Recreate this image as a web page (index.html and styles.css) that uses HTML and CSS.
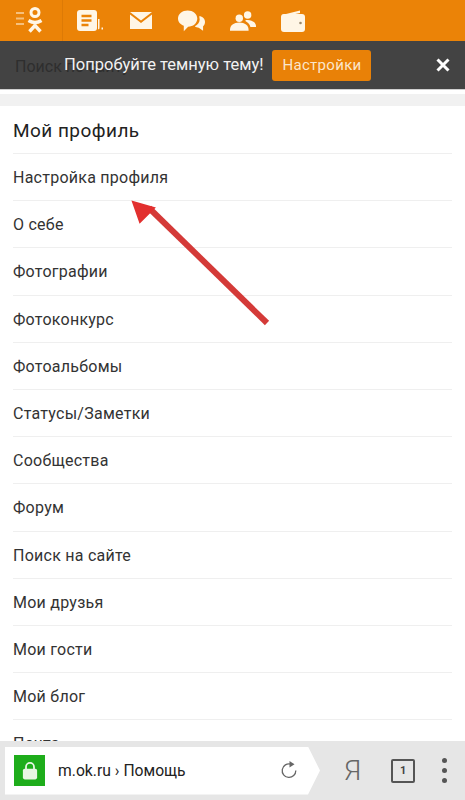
FILE: index.html
```html
<!DOCTYPE html>
<html lang="ru">
<head>
    <meta charset="UTF-8">
    <meta name="viewport" content="width=device-width, initial-scale=1.0">
    <title>Мой профиль</title>
    <link rel="stylesheet" href="styles.css">
</head>
<body>
    <div class="page">
        <header class="topbar">
            <div class="logo-cell">
                <svg class="logo" width="28" height="26" viewBox="0 0 28 26">
                    <path d="M1 6h8M1 11.500h8M1 17h8" class="logo-lines"/>
                    <circle cx="20" cy="5.500" r="4" class="logo-ring"/>
                    <path d="M13.500 13.500c4.500 2.800 8.500 2.800 13 0M20 16v2M14.500 24.500l5.500-6 5.500 6" class="logo-x"/>
                </svg>
            </div>
            <nav class="topnav">
                <svg class="nav-icon icon-feed" width="26" height="21" viewBox="0 0 26 21">
                    <path d="M3 0h14a3 3 0 0 1 3 3v15a3 3 0 0 1-3 3H3a3 3 0 0 1-3-3V3a3 3 0 0 1 3-3z" fill="#fff6e6"/>
                    <path d="M4.500 6h10M4.500 10.500h10M4.500 15h7" stroke="#eb8307" stroke-width="2.400"/>
                    <path d="M21 9h1.500v8a2 2 0 0 1-1.500 2.500zM24.500 17.500H26v2h-1.500z" fill="#fff6e6"/>
                </svg>
                <svg class="nav-icon icon-mail" width="22" height="17" viewBox="0 0 22 17">
                    <path d="M0 0h22L11 8.500z" fill="#fff6e6"/>
                    <path d="M0 2.500 11 11 22 2.500V17H0z" fill="#fff6e6"/>
                </svg>
                <svg class="nav-icon icon-chat" width="27" height="22" viewBox="0 0 28 22">
                    <path d="M22 6c3.500 0 6 2.500 6 6 0 2-.8 3.500-2 4.500V21l-4.500-3c-1.500 0-3-.5-4-1.500 2.800-1.500 5-4 5-7z" fill="#fff6e6"/>
                    <path d="M10 0c5.500 0 10 3.400 10 8.500S15.500 17 10.500 17L6 21.500V16C2.500 14.800 0 12 0 8.500 0 3.400 4.500 0 10 0z" fill="#fff6e6"/>
                </svg>
                <svg class="nav-icon icon-people" width="26" height="20" viewBox="0 0 28 21">
                    <circle cx="10" cy="7.500" r="4" fill="#fff6e6"/>
                    <circle cx="19" cy="4" r="4" fill="#fff6e6"/>
                    <path d="M0 20c0-5 4-8 10-8s10 3 10 8v1H0z" fill="#fff6e6"/>
                    <path d="M17 9.500c6 0 11 2 11 6.500v1h-6c-.8-3-2.500-5-5.500-6.500z" fill="#fff6e6"/>
                </svg>
                <svg class="nav-icon icon-wallet" width="24" height="22" viewBox="0 0 24 22">
                    <path d="M1 5 19 .5V3L5 6z" fill="#fff6e6"/>
                    <path d="M3 4h18a3 3 0 0 1 3 3v12a3 3 0 0 1-3 3H3a3 3 0 0 1-3-3V7a3 3 0 0 1 3-3z" fill="#fff6e6"/>
                    <circle cx="19.500" cy="13" r="1.300" fill="#9a8a70"/>
                </svg>
            </nav>
        </header>

        <div class="theme-bar">
            <span class="search-under">Поиск по сайту</span>
            <span class="theme-text">Попробуйте темную тему!</span>
            <button class="theme-btn">Настройки</button>
            <svg class="theme-close" width="14" height="14" viewBox="0 0 14 14">
                <path d="M1.500 1.500l11 11M12.500 1.500l-11 11" stroke="#fff" stroke-width="3"/>
            </svg>
        </div>

        <div class="gap-strip"></div>

        <main class="menu">
            <h2 class="menu-title">Мой профиль</h2>
            <a class="menu-item">Настройка профиля</a>
            <a class="menu-item">О себе</a>
            <a class="menu-item">Фотографии</a>
            <a class="menu-item">Фотоконкурс</a>
            <a class="menu-item">Фотоальбомы</a>
            <a class="menu-item">Статусы/Заметки</a>
            <a class="menu-item">Сообщества</a>
            <a class="menu-item">Форум</a>
            <a class="menu-item">Поиск на сайте</a>
            <a class="menu-item">Мои друзья</a>
            <a class="menu-item">Мои гости</a>
            <a class="menu-item">Мой блог</a>
            <a class="menu-item">Почта</a>
        </main>

        <svg class="arrow" width="160" height="140" viewBox="0 0 160 140">
            <path d="M147 133 29 18" stroke="#d43a38" stroke-width="6"/>
            <path d="M13 12 34 18 20 32z" fill="#e2302f" stroke="#e2302f" stroke-width="2"/>
        </svg>

        <footer class="browser-bar">
            <div class="address">
                <div class="lock-box">
                    <svg width="16" height="19" viewBox="0 0 18 20">
                        <path d="M4.500 9V6a4.500 4.500 0 0 1 9 0v3" fill="none" stroke="#e9f6e4" stroke-width="2"/>
                        <rect x="1" y="8" width="16" height="12" rx="2" fill="#e9f6e4"/>
                    </svg>
                </div>
                <span class="url">m.ok.ru › Помощь</span>
                <svg class="reload" width="17" height="19" viewBox="0 0 17 19">
                    <path d="M14.800 9.500a6.800 6.800 0 1 1-5-6.400" fill="none" stroke="#666" stroke-width="1.300"/>
                    <path d="M8.500 0l5 3.300-5 3.200z" fill="#666"/>
                </svg>
            </div>
            <div class="browser-tools">
                <span class="ya">Я</span>
                <span class="tabs">1</span>
                <span class="dots"><i></i><i></i><i></i></span>
            </div>
        </footer>
    </div>
</body>
</html>
```

FILE: styles.css
```css
* {
    box-sizing: border-box;
    margin: 0;
    padding: 0;
}

html, body {
    height: 100%;
}

body {
    background-color: white;
    font-family: Roboto, 'Liberation Sans', sans-serif;
    overflow: hidden;
}

.page {
    position: relative;
    width: 465px;
    height: 800px;
    overflow: hidden;
}

/* top orange bar */
.topbar {
    display: flex;
    height: 41px;
    background-color: #eb8307;
}

.logo-cell {
    width: 63px;
    padding: 7px 0 0 15px;
    border-right: 1px solid #dd7a06;
}

.logo-lines {
    fill: none;
    stroke: #f6c07c;
    stroke-width: 1.800;
}

.logo-ring {
    fill: none;
    stroke: #fff6e6;
    stroke-width: 3;
}

.logo-x {
    fill: none;
    stroke: #fff6e6;
    stroke-width: 3.400;
}

.topnav {
    display: flex;
    align-items: center;
    padding-left: 14px;
}

.icon-feed {
    margin-right: 27px;
}

.icon-mail {
    margin-right: 26px;
}

.icon-chat {
    margin-right: 25px;
}

.icon-people {
    margin-right: 25px;
}

/* dark theme hint */
.theme-bar {
    position: relative;
    display: flex;
    align-items: center;
    height: 49px;
    padding: 0 0 2px 64px;
    background-color: #434343;
    border-bottom: 1px solid #d0d0d0;
}

.search-under {
    position: absolute;
    left: 15px;
    top: 16px;
    color: #2e2e2e;
    font-size: 16px;
}

.theme-text {
    position: relative;
    color: #f2f2f2;
    font-size: 16.500px;
}

.theme-btn {
    width: 99px;
    height: 31px;
    margin: 2px 0 0 9px;
    background-color: #e98107;
    border: none;
    border-radius: 3px;
    color: #fbe6cb;
    font-family: inherit;
    font-size: 15px;
    letter-spacing: 0.300px;
}

.theme-close {
    margin-left: 65px;
    margin-top: 2px;
}

.gap-strip {
    height: 16px;
    border-top: 4px solid white;
    background-color: #f1f1f1;
}

/* menu list */
.menu {
    padding: 0 13px;
}

.menu-title {
    height: 48px;
    padding-top: 13px;
    color: #222;
    font-size: 19px;
    font-weight: 400;
    letter-spacing: 0.450px;
    border-bottom: 1px solid #efefef;
}

.menu-item {
    display: block;
    height: 47.200px;
    padding-top: 14px;
    color: #333;
    font-size: 16px;
    letter-spacing: 0.250px;
    border-bottom: 1px solid #efefef;
}

.arrow {
    position: absolute;
    left: 120px;
    top: 190px;
}

/* browser toolbar */
.browser-bar {
    position: absolute;
    left: 0;
    right: 0;
    bottom: 0;
    display: flex;
    align-items: center;
    height: 59px;
    padding-left: 5px;
    background-color: #e6e6e6;
}

.address {
    display: flex;
    align-items: center;
    width: 315px;
    height: 48px;
    padding-left: 9px;
    background-color: white;
    clip-path: polygon(0 0, 303px 0, 100% 50%, 303px 100%, 0 100%);
}

.lock-box {
    display: flex;
    align-items: center;
    justify-content: center;
    width: 31px;
    height: 31px;
    background-color: #1ead1b;
}

.url {
    margin-left: 13px;
    color: #222;
    font-size: 15.700px;
}

.reload {
    margin-left: auto;
    margin-right: 22px;
}

.browser-tools {
    display: flex;
    align-items: center;
}

.ya {
    margin-left: 24px;
    color: #666;
    font-weight: 300;
    font-size: 28px;
}

.tabs {
    display: flex;
    align-items: center;
    justify-content: center;
    width: 24px;
    height: 24px;
    margin-left: 30px;
    border: 2px solid #555;
    border-radius: 2px;
    color: #444;
    font-size: 11px;
    font-weight: 700;
}

.dots {
    display: flex;
    flex-direction: column;
    gap: 5px;
    margin-left: 27px;
}

.dots i {
    display: block;
    width: 5px;
    height: 5px;
    border-radius: 50%;
    background-color: #555;
}
```
